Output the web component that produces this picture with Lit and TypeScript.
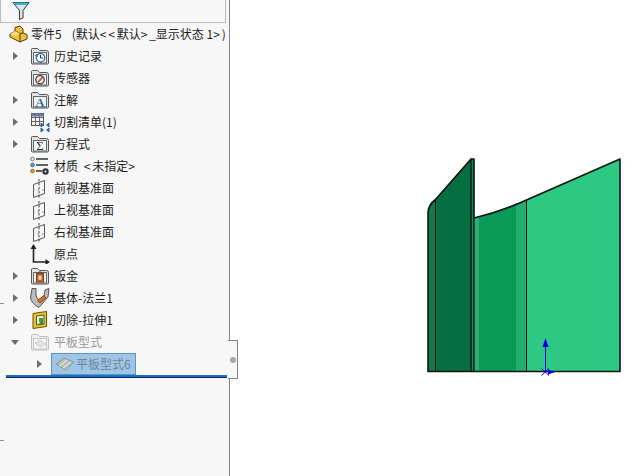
import { LitElement, html, css, svg } from "lit";
import { customElement } from "lit/decorators.js";

const folder = (inner: unknown, dim = false) => svg`
  <svg class=${dim ? "ic faded" : "ic"} viewBox="0 0 20 18" width="20" height="18">
    <path d="M1.5 5V2.5Q1.5 1.5 2.5 1.5H7.5L9.5 3.5H16.5Q18.5 3.5 18.5 5.5V16Q18.5 17 17.5 17H2.5Q1.5 17 1.5 16Z" fill="#e2e2e2" stroke="#555"/>
    <rect x="3.5" y="5.5" width="13" height="10.5" fill="#f2f5f8" stroke="#666"/>
    ${inner}
  </svg>`;

const plane = svg`<svg class="ic" viewBox="0 0 20 20" width="20" height="20">
  <path d="M3.5 6.5L14.5 2.5V15.5L3.5 19.5Z" fill="none" stroke="#555"/>
  <path d="M9 1V20" stroke="#444" stroke-dasharray="2.5 1.5" fill="none"/>
  <path d="M3 12H15" stroke="#777" stroke-dasharray="1.5 3"/>
</svg>`;

const icons: Record<string, unknown> = {
  history: folder(svg`<circle cx="10.5" cy="10.8" r="4.2" fill="#fff" stroke="#3a6f9a" stroke-width="1.4"/><path d="M10.5 8V11H13" stroke="#333" fill="none"/><path d="M4.5 8.5L7.5 6.5L8 10Z" fill="#2a7fc0"/>`),
  sensor: folder(svg`<circle cx="10" cy="10.8" r="4.2" fill="#e8edf5" stroke="#444" stroke-width="1.3"/><path d="M8 13.2L12.8 8" stroke="#d8541e" stroke-width="1.8"/>`),
  note: folder(svg`<text x="10" y="15.5" text-anchor="middle" class="glyph" fill="#2f6ea5">A</text>`),
  cut: svg`<svg class="ic" viewBox="0 0 20 20" width="20" height="20">
    <rect x="1.5" y="1.5" width="12" height="12" fill="#f4f4f4" stroke="#555"/>
    <path d="M1.5 5.5H13.5M1.5 9.5H13.5M5.5 1.5V13.5M9.5 1.5V13.5" stroke="#666"/>
    <rect x="1.5" y="1.5" width="12" height="3" fill="#66809a"/>
    <path d="M11 11l2.5 2-2.5 2zM19 11l-2.5 2 2.5 2zM11 16l2.5 2-2.5 2zM19 16l-2.5 2 2.5 2z" fill="#2b7db5" stroke="#1f6a9c"/>
  </svg>`,
  eq: folder(svg`<text x="10" y="15" text-anchor="middle" class="sigma" fill="#333">Σ</text>`),
  mat: svg`<svg class="ic" viewBox="0 0 20 20" width="20" height="20">
    <circle cx="2.5" cy="3" r="1.8" fill="#eee" stroke="#777"/>
    <circle cx="2.5" cy="9" r="1.8" fill="#5c9ad0" stroke="#3a6f9a"/>
    <circle cx="2.5" cy="15" r="1.8" fill="#e8a91c" stroke="#9a7210"/>
    <path d="M6 3H18M6 9H18M6 15H12" stroke="#333" stroke-width="1.6"/>
    <circle cx="15.5" cy="15.5" r="3.2" fill="#333"/><circle cx="15.5" cy="15.5" r="1" fill="#eee"/>
  </svg>`,
  plane,
  origin: svg`<svg class="ic" viewBox="0 0 20 20" width="20" height="20">
    <path d="M3.5 3V18H17" stroke="#222" stroke-width="1.6" fill="none"/>
    <path d="M3.5 0L6.5 5H0.5Z M20 18L15.5 15V21Z" fill="#222"/>
  </svg>`,
  sheet: folder(svg`<rect x="6.5" y="6.5" width="7" height="8.5" fill="#c8632a" stroke="#7a3a14"/><rect x="8.5" y="8.8" width="3" height="3.8" fill="#e8e8e8"/><path d="M9 5H11" stroke="#7a3a14"/>`),
  flange: svg`<svg class="ic" viewBox="0 0 20 20" width="20" height="20">
    <path d="M2 0.5L0.5 10Q2 16 9 19.5L18 9L19 0.5L15 2L14 8L9 12Q6 10 6 7L6 0.5Z" fill="#bdbdbd" stroke="#555"/>
    <path d="M7.5 12.5L14 7.5L16 10L10 15Z" fill="#d9722c" stroke="#8a4716"/>
  </svg>`,
  extrude: svg`<svg class="ic" viewBox="0 0 20 20" width="20" height="20">
    <path d="M3 3.5L16.5 1.5V16.5L3 18.5Z" fill="#e9c52d" stroke="#5f5212"/>
    <path d="M6.5 6L14 5V14L6.5 15Z" fill="#f6f3d8" stroke="#5f5212"/>
    <path d="M9 8H13V12H9Z" fill="#2fa04a"/><path d="M8 14.5L13 10V14Z" fill="#1f8f3c"/>
  </svg>`,
  flatFolder: folder(svg`<path d="M5 10L10 7L16 11L11 14Z" fill="#ddd" stroke="#777"/><path d="M7 11L12 8M9 12.5L14 9.5" stroke="#999"/>`, true),
  flat: svg`<svg class="ic" viewBox="0 0 20 18" width="20" height="18">
    <path d="M1 9L9 3L19 7L10.5 15Z" fill="#b4bcb9" stroke="#8a9694"/>
    <path d="M4.5 11L12 5M8 13L15.5 7" stroke="#dfe4e2" stroke-width="1.4"/>
  </svg>`,
};

interface Row { name: unknown; icon: string; arrow?: "r" | "d"; dim?: boolean }

const rows: Row[] = [
  { name: "历史记录", icon: "history", arrow: "r" },
  { name: "传感器", icon: "sensor" },
  { name: "注解", icon: "note", arrow: "r" },
  { name: "切割清单(1)", icon: "cut", arrow: "r" },
  { name: "方程式", icon: "eq", arrow: "r" },
  { name: html`材质 <span class="gap wide">&lt;</span>未指定<span class="wide">&gt;</span>`, icon: "mat" },
  { name: "前视基准面", icon: "plane" },
  { name: "上视基准面", icon: "plane" },
  { name: "右视基准面", icon: "plane" },
  { name: "原点", icon: "origin" },
  { name: "钣金", icon: "sheet", arrow: "r" },
  { name: "基体-法兰1", icon: "flange", arrow: "r" },
  { name: "切除-拉伸1", icon: "extrude", arrow: "r" },
  { name: "平板型式", icon: "flatFolder", arrow: "d", dim: true },
];

@customElement("app-root")
export class AppRoot extends LitElement {
  static styles = css`
    :host {
      display: flex;
      width: 636px;
      height: 476px;
      overflow: hidden;
      background: #fff;
      font-family: "Noto Sans CJK SC", "Liberation Sans", sans-serif;
      font-size: 12px;
      color: #1c1c1c;
    }
    .panel {
      position: relative;
      flex: none;
      width: 229px;
      height: 476px;
      background: #f7f7f7;
      border-right: 1px solid #858585;
      display: flex;
      flex-direction: column;
    }
    .filter {
      flex: none;
      box-sizing: border-box;
      width: 226px;
      height: 23px;
      border: 1px solid #bcbcbc;
      border-top: none;
      padding-left: 11px;
      display: flex;
      align-items: flex-start;
    }
    .row {
      flex: none;
      height: 22px;
      line-height: 20px;
      display: flex;
      align-items: center;
      white-space: nowrap;
    }
    .root {
      padding-left: 9px;
      gap: 2px;
    }
    .spaced { margin-left: 10px; }
    .wide { letter-spacing: 1.8px; }
    .gap { margin-left: 3px; }
    .arrow {
      flex: none;
      width: 30px;
      display: flex;
      justify-content: center;
    }
    .arrow i {
      width: 0;
      height: 0;
      border-style: solid;
      border-color: transparent transparent transparent #6e6e6e;
      border-width: 4px 0 4px 5px;
    }
    .arrow i.d {
      border-color: #6e6e6e transparent transparent transparent;
      border-width: 5px 4px 0 4px;
    }
    .iconbox {
      flex: none;
      width: 24px;
      display: flex;
      align-items: center;
    }
    .ic { display: block; }
    .faded { opacity: 0.35; }
    .glyph { font: bold 13px "Liberation Serif", serif; }
    .sigma { font: 13px "Liberation Serif", serif; }
    .dim { color: #9a9a9a; }
    .sub { padding-left: 33px; }
    .sub .arrow { width: 12px; }
    .sel {
      box-sizing: border-box;
      width: 85px;
      height: 22px;
      margin-left: 6px;
      display: flex;
      align-items: center;
      gap: 1px;
      padding-left: 3px;
      background: #9dc6e8;
      border: 1px solid #5d97b8;
      color: #6f8597;
    }
    .bar {
      flex: none;
      margin: 0 2px 0 6px;
      height: 2px;
      background: #1f70c0;
      border-bottom: 1px solid #0a1a80;
    }
    .tab {
      position: absolute;
      left: 228px;
      top: 340px;
      box-sizing: border-box;
      width: 10px;
      height: 39px;
      background: #f7f7f7;
      border: 1px solid #858585;
      border-left: none;
      display: flex;
      align-items: center;
      justify-content: center;
    }
    .tab b {
      width: 6px;
      height: 6px;
      border-radius: 50%;
      background: #a8a8a8;
    }
    .tick {
      position: absolute;
      left: 0;
      width: 4px;
      height: 1px;
      background: #909090;
    }
    .t1 { top: 303px; }
    .t2 { top: 440px; }
    .canvas { flex: 1; height: 476px; }
    .canvas svg { display: block; }
  `;

  render() {
    return html`
      <div class="panel">
        <div class="filter">
          <svg viewBox="0 0 18 20" width="18" height="20">
            <path d="M1 2.5H17L11 10.5V18L7.5 19.5V10.5Z" fill="#dfe4e6" stroke="#2e3a40"/>
            <path d="M2 2.5H16L14.5 5H3.5Z" fill="#2fb6d6"/>
          </svg>
        </div>
        <div class="row root">
          <svg viewBox="0 0 20 18" width="20" height="18">
            <path d="M1 9L6 6V2.5L11 1L14 4V8L18 9.5V14L11 17L1 12Z" fill="#eec23a" stroke="#4d3f10"/>
            <path d="M6 6L11 8.5V17M11 8.5L14 8" fill="none" stroke="#4d3f10"/>
            <path d="M1 9L6 6L11 8.5L6 11Z" fill="#f8dd7a"/>
          </svg>
          <span>零件5<span class="spaced">(默认</span><span class="wide">&lt;&lt;</span>默认<span class="wide">&gt;</span>_显示状态 1<span class="wide">&gt;</span>)</span>
        </div>
        ${rows.map(
          (r) => html`
            <div class="row ${r.dim ? "dim" : ""}">
              <span class="arrow">${r.arrow ? html`<i class=${r.arrow}></i>` : ""}</span>
              <span class="iconbox">${icons[r.icon]}</span>
              <span>${r.name}</span>
            </div>
          `
        )}
        <div class="row sub">
          <span class="arrow"><i class="r"></i></span>
          <div class="sel">${icons.flat}<span>平板型式6</span></div>
        </div>
        <div class="bar"></div>
        <div class="tab"><b></b></div>
        <span class="tick t1"></span>
        <span class="tick t2"></span>
      </div>
      <div class="canvas">
        <svg viewBox="230 0 406 476" width="406" height="476">
          <path d="M428 371.5V213Q428 205 435.5 199.5V371.5Z" fill="#0c7a4c"/>
          <path d="M435.5 199.5L471 159V371.5H435.5Z" fill="#066f42"/>
          <path d="M471 159H474V371.5H471Z" fill="#0a8a54"/>
          <path d="M474 218L479 217V371.5H474Z" fill="#2fae74"/>
          <path d="M479 217Q500 211 516 204V371.5H479Z" fill="#0a9a58"/>
          <path d="M516 204L526.5 200V371.5H516Z" fill="#25ac70"/>
          <path d="M526.5 200L620 159V371.5H526.5Z" fill="#2cc884"/>
          <path d="M428 371.5V213Q428 205 435.5 199.5L471 159H474V218Q500 212 526.5 200L620 159V371.5Z"
            fill="none" stroke="#111" stroke-width="1.6" stroke-linejoin="round"/>
          <path d="M435.5 199.5V371.5M526.5 200V371.5" stroke="#111" stroke-width="1"/>
          <path d="M471 159V371.5M474 218V371.5" stroke="#111" stroke-width="1.3"/>
          <path d="M545.5 346V372" stroke="#0000e6" stroke-width="1"/>
          <path d="M545.5 338L548.5 347H542.5Z" fill="#0000e6"/>
          <path d="M548 369.5L555 372L548 374.5Z" fill="#0000e6"/>
          <path d="M541.5 368.5L549 375.5M549 368.5L541.5 375.5" stroke="#0000e6" stroke-width="1"/>
        </svg>
      </div>
    `;
  }
}
